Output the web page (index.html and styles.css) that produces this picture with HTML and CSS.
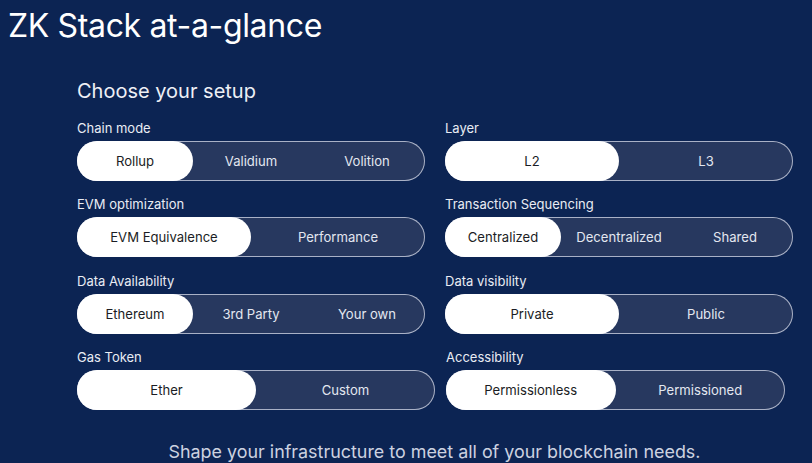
FILE: index.html
```html
<!DOCTYPE html>
<html lang="en">
<head>
<meta charset="utf-8">
<title>ZK Stack at-a-glance</title>
<link rel="stylesheet" href="styles.css">
</head>
<body>
<main class="page">
  <h1 class="title">ZK Stack at-a-glance</h1>
  <section class="setup">
    <h2 class="setup-title">Choose your setup</h2>
    <div class="grid">
      <div class="field">
        <div class="label">Chain mode</div>
        <div class="toggle"><span class="opt on">Rollup</span><span class="opt">Validium</span><span class="opt">Volition</span></div>
      </div>
      <div class="field">
        <div class="label">Layer</div>
        <div class="toggle"><span class="opt on">L2</span><span class="opt">L3</span></div>
      </div>
      <div class="field">
        <div class="label">EVM optimization</div>
        <div class="toggle"><span class="opt on">EVM Equivalence</span><span class="opt">Performance</span></div>
      </div>
      <div class="field">
        <div class="label">Transaction Sequencing</div>
        <div class="toggle"><span class="opt on">Centralized</span><span class="opt">Decentralized</span><span class="opt">Shared</span></div>
      </div>
      <div class="field">
        <div class="label">Data Availability</div>
        <div class="toggle"><span class="opt on">Ethereum</span><span class="opt">3rd Party</span><span class="opt">Your own</span></div>
      </div>
      <div class="field">
        <div class="label">Data visibility</div>
        <div class="toggle"><span class="opt on">Private</span><span class="opt">Public</span></div>
      </div>
      <div class="field">
        <div class="label">Gas Token</div>
        <div class="toggle toggle-wide"><span class="opt on">Ether</span><span class="opt">Custom</span></div>
      </div>
      <div class="field field-shift">
        <div class="label">Accessibility</div>
        <div class="toggle toggle-narrow"><span class="opt on">Permissionless</span><span class="opt">Permissioned</span></div>
      </div>
    </div>
  </section>
  <p class="tagline">Shape your infrastructure to meet all of your blockchain needs.</p>
</main>
</body>
</html>
```

FILE: styles.css
```css
* { box-sizing: border-box; }
html, body {
  margin: 0;
  padding: 0;
  background: #0c2453;
}
body {
  font-family: Inter, "Noto Sans", sans-serif;
  color: #ffffff;
  width: 812px;
  height: 463px;
  overflow: hidden;
}
.page {
  padding: 6px 0 0 8px;
}
.title {
  margin: 0;
  font-size: 32px;
  line-height: 40px;
  font-weight: 400;
  letter-spacing: -0.35px;
}
.setup {
  padding-left: 69px;
  margin-top: 33px;
}
.setup-title {
  margin: 0 0 17px 0;
  font-size: 20px;
  line-height: 24px;
  font-weight: 400;
  color: #eef0f6;
}
.grid {
  display: grid;
  grid-template-columns: 348px 348px;
  column-gap: 20px;
  row-gap: 15.33px;
}
.field {
  display: flex;
  flex-direction: column;
  gap: 5px;
}
.label {
  font-size: 13px;
  line-height: 16px;
  color: #e9ecf3;
}
.toggle {
  display: flex;
  height: 40px;
  width: 348px;
  border-radius: 20px;
  background: #27385f;
  box-shadow: inset 0 0 0 1px #a9b1c6;
}
.toggle-wide { width: 358px; }
.toggle-narrow { width: 339px; }
.field-shift { margin-left: 1px; }
.opt {
  flex: 1 1 0;
  display: flex;
  align-items: center;
  justify-content: center;
  font-size: 13.1px;
  color: #e3e7f0;
  border-radius: 20px;
}
.opt.on {
  background: #ffffff;
  color: #1b1d24;
}
.tagline {
  margin: 30px 0 0 0;
  padding-left: 49px;
  text-align: center;
  font-size: 17.9px;
  line-height: 24px;
  color: #ccd2e0;
}
```
